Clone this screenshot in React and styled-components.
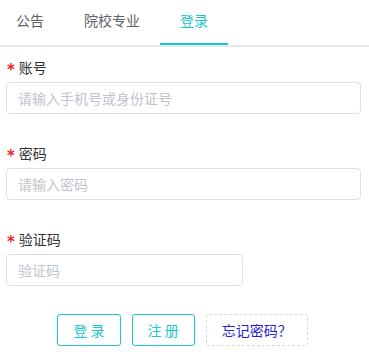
import React from 'react';
import styled, { createGlobalStyle } from 'styled-components';

const GlobalStyle = createGlobalStyle`
  body {
    margin: 0;
    background: #fff;
    font-family: "Noto Sans CJK SC", "Noto Sans", sans-serif;
    font-size: 14px;
    color: #303133;
  }
`;

const TEAL = '#1bc5c8';

const Tabs = styled.div`
  display: flex;
  padding-left: 16px;
  border-bottom: 2px solid #e4e7ed;
  height: 45px;
`;

const Tab = styled.div`
  position: relative;
  height: 45px;
  line-height: 40px;
  padding: 0 20px;
  color: ${p => (p.active ? TEAL : '#606266')};
  &:first-child {
    padding-left: 0;
  }
  &::after {
    content: '';
    display: ${p => (p.active ? 'block' : 'none')};
    position: absolute;
    left: 0;
    right: 0;
    bottom: 0;
    height: 2px;
    background: ${TEAL};
  }
`;

const Form = styled.div`
  padding: 10px 8px 0 6px;
`;

const Item = styled.div`
  margin-bottom: 29px;
`;

const Label = styled.div`
  display: flex;
  align-items: center;
  height: 20px;
  line-height: 20px;
  margin-bottom: 5px;
  color: #303133;
  padding-left: 1px;
`;

const Star = styled.span`
  color: #f01e2c;
  margin-right: 4px;
  font-family: "DejaVu Sans", sans-serif;
  font-size: 15px;
  font-weight: bold;
  position: relative;
  top: 3px;
`;

const Input = styled.input`
  box-sizing: border-box;
  display: block;
  width: ${p => p.w || '355px'};
  height: 32px;
  border: 1px solid #dcdfe6;
  border-radius: 4px;
  padding: 0 11px;
  font-family: inherit;
  font-size: 14px;
  color: #606266;
  outline: none;
  &::placeholder {
    color: #c0c4cc;
  }
`;

const Actions = styled.div`
  display: flex;
  justify-content: center;
  gap: 11px;
  margin-top: -1px;
  padding-right: 2px;
`;

const Button = styled.button`
  box-sizing: border-box;
  height: 32px;
  padding: 0 15px;
  border-radius: 3px;
  background: #fff;
  font-family: inherit;
  font-size: 14px;
  cursor: pointer;
  white-space: pre;
  border: 1px ${p => (p.dashed ? 'dashed #d9d9d9' : `solid ${TEAL}`)};
  color: ${p => (p.dashed ? '#2a1bd9' : TEAL)};
`;

function Field({ label, placeholder, width, type }) {
  return (
    <Item>
      <Label>
        <Star>*</Star>
        {label}
      </Label>
      <Input type={type || 'text'} placeholder={placeholder} w={width} />
    </Item>
  );
}

export default function App() {
  return (
    <>
      <GlobalStyle />
      <Tabs>
        <Tab>公告</Tab>
        <Tab>院校专业</Tab>
        <Tab active>登录</Tab>
      </Tabs>
      <Form>
        <Field label="账号" placeholder="请输入手机号或身份证号" />
        <Field label="密码" placeholder="请输入密码" type="password" />
        <Field label="验证码" placeholder="验证码" width="237px" />
        <Actions>
          <Button>登 录</Button>
          <Button>注 册</Button>
          <Button dashed>忘记密码？</Button>
        </Actions>
      </Form>
    </>
  );
}
